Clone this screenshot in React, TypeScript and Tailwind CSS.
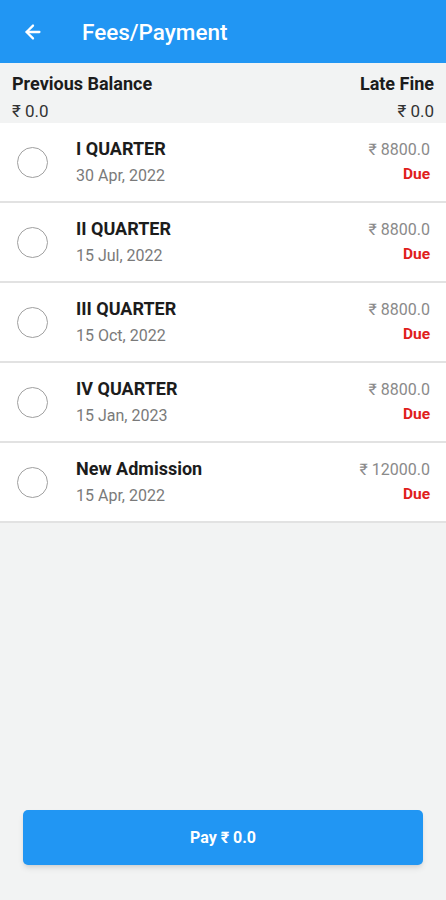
import { ArrowLeft } from "lucide-react";

type Fee = { title: string; date: string; amount: string };

const fees: Fee[] = [
  { title: "I QUARTER", date: "30 Apr, 2022", amount: "₹ 8800.0" },
  { title: "II QUARTER", date: "15 Jul, 2022", amount: "₹ 8800.0" },
  { title: "III QUARTER", date: "15 Oct, 2022", amount: "₹ 8800.0" },
  { title: "IV QUARTER", date: "15 Jan, 2023", amount: "₹ 8800.0" },
  { title: "New Admission", date: "15 Apr, 2022", amount: "₹ 12000.0" },
];

function FeeRow({ fee }: { fee: Fee }) {
  return (
    <div className="flex items-center h-[80px] bg-white border-b-2 border-[#e2e2e2] pl-[17px] pr-[16px]">
      <div className="w-[31px] h-[31px] rounded-full border-[1.5px] border-[#a0a0a0] shrink-0" />
      <div className="flex-1 min-w-0 ml-[28px]">
        <div className="text-[18px] font-bold text-[#1c1c1c] leading-[22px]">{fee.title}</div>
        <div className="text-[16px] text-[#7a7a7a] leading-[20px] mt-[6px]">{fee.date}</div>
      </div>
      <div className="text-right pb-[1px]">
        <div className="text-[16px] text-[#8a8a8a] leading-[20px]">{fee.amount}</div>
        <div className="text-[15.5px] font-bold text-[#e0201c] leading-[18px] mt-[5px]">Due</div>
      </div>
    </div>
  );
}

export default function App() {
  return (
    <div
      className="w-[446px] h-[900px] bg-[#f2f3f3] flex flex-col"
      style={{ fontFamily: "Roboto, 'Noto Sans', sans-serif" }}
    >
      <div className="h-[63px] bg-[#2196f3] flex items-center shrink-0">
        <ArrowLeft className="w-[22px] h-[22px] text-white ml-[22px] mt-[1px]" strokeWidth={2.5} />
        <span className="ml-[38px] text-[22.5px] font-medium text-white mt-[2px]">Fees/Payment</span>
      </div>

      <div className="flex justify-between px-[12px] pt-[10px] h-[60px]">
        <div>
          <div className="text-[18px] font-bold text-[#1c1c1c] leading-[22px]">Previous Balance</div>
          <div className="text-[17px] text-[#333] leading-[22px] mt-[5px]">₹ 0.0</div>
        </div>
        <div className="text-right">
          <div className="text-[18px] font-bold text-[#1c1c1c] leading-[22px]">Late Fine</div>
          <div className="text-[17px] text-[#333] leading-[22px] mt-[5px]">₹ 0.0</div>
        </div>
      </div>

      <div className="flex flex-col">
        {fees.map((f) => (
          <FeeRow key={f.title} fee={f} />
        ))}
      </div>

      <div className="flex-1" />

      <div className="px-[23px] pb-[35px]">
        <button className="w-full h-[55px] bg-[#2196f3] rounded-[5px] shadow-md text-white text-[16px] font-bold">
          Pay ₹ 0.0
        </button>
      </div>
    </div>
  );
}
